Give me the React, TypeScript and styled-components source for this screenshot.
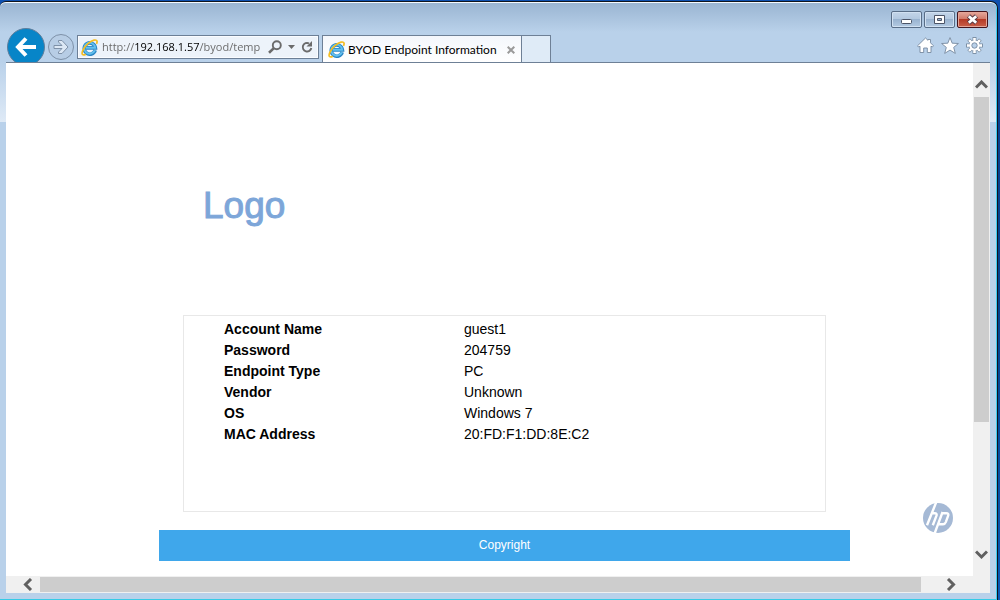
import React from "react";
import styled, { createGlobalStyle, css } from "styled-components";

const Global = createGlobalStyle`
  *, *::before, *::after { box-sizing: border-box; }
  html { background: #0448a0; }
  body { margin: 0; font-family: "Liberation Sans", Arial, sans-serif; }
  button { padding: 0; margin: 0; border: 0; background: none; font: inherit; cursor: pointer; }
  svg { display: block; }
`;

const Desktop = styled.div`
  min-height: 100vh;
  display: flex;
  padding: 1px 2px 0 0;
  background: linear-gradient(#0d50b0, #0a3f94 16%, #04408f 50%, #0a58b8);
`;

const Frame = styled.div`
  flex: 1;
  display: flex;
  flex-direction: column;
  min-width: 0;
  padding: 1px 7px 7px 6px;
  border: solid #10141c;
  border-width: 1px 1px 0 0;
  border-radius: 6px 7px 0 0;
  background:
    linear-gradient(#b9d1ea, #dfeaf6) left 60px / 6px 60px no-repeat,
    linear-gradient(#b9d1ea, #dfeaf6) right 60px / 7px 60px no-repeat,
    linear-gradient(#99b4d1, #b9d1ea 30px, #b9d1ea 61px, #b9d1ea);
  box-shadow: inset 0 1px #f4f9fe, inset -1px 0 #3ecdf0, inset 0 -1px #36cbe6;
`;

const Caption = styled.div`
  display: flex;
  justify-content: flex-end;
  gap: 2px;
  height: 25px;
  padding: 8px 2px 0 0;
`;

const CaptionButton = styled.button<{ $close?: boolean }>`
  display: grid;
  place-items: center;
  width: 31px;
  height: 17px;
  border: 1px solid ${(p) => (p.$close ? "#45141c" : "#586d87")};
  border-radius: 2px;
  background: ${(p) =>
    p.$close
      ? "linear-gradient(#e6a89c, #cf7868 48%, #b53a26 50%, #c9604a)"
      : "linear-gradient(#c3d5e9, #b2c8e0 48%, #99b3d0 50%, #b3cae2)"};
  box-shadow: inset 0 0 0 1px ${(p) => (p.$close ? "#e4a598" : "#d1e1f2")};
`;

const Toolbar = styled.div`
  display: flex;
  align-items: flex-end;
  height: 35px;
  border-bottom: 1px solid #6e8096;
`;

const Navigation = styled.nav`
  display: flex;
  width: 71px;
  height: 34px;
  overflow: hidden;
`;

const NavButton = styled.button<{ $back?: boolean }>`
  flex: none;
  align-self: flex-start;
  display: grid;
  place-items: center;
  border-radius: 50%;
  ${(p) =>
    p.$back
      ? css`
          width: 38px;
          height: 38px;
          margin-left: 1px;
          background: #0785c8;
          border: 1px solid #5f7e9c;
        `
      : css`
          width: 26px;
          height: 26px;
          margin: 6px 0 0 3px;
          border: 1px solid #7e91a8;
          background: #b7cde5;
        `}
`;

const AddressBar = styled.form`
  display: flex;
  align-items: center;
  width: 242px;
  height: 24px;
  margin-bottom: 3px;
  padding: 0 3px;
  border: 1px solid #6c7f96;
  background: #edf3fa;
  box-shadow: inset 0 0 0 1px #fafcff;
`;

const AddressInput = styled.input`
  flex: 1;
  min-width: 0;
  height: 20px;
  margin: 0 4px;
  padding: 0;
  border: 0;
  outline: 0;
  font: 11px/20px "Open Sans", "Noto Sans", sans-serif;
  color: transparent;
  background: linear-gradient(90deg, #666 33px, #000 33px, #000 98px, #666 98px);
  background-clip: text;
`;

const AddressAction = styled.button`
  display: grid;
  place-items: center;
  width: 16px;
  height: 20px;
`;

const Tab = styled.div`
  display: flex;
  align-items: center;
  width: 200px;
  height: 27px;
  margin-left: 3px;
  padding: 1px 4px 0 5px;
  border: solid #6e8096;
  border-width: 1px 1px 0;
  background: linear-gradient(#f4f7fc, #fff);
`;

const TabTitle = styled.span`
  flex: 1;
  padding-left: 3px;
  white-space: nowrap;
  font: 12px/20px Lato, "Open Sans", sans-serif;
  color: #000;
`;

const TabClose = styled.button`
  display: grid;
  place-items: center;
  width: 12px;
  height: 16px;
`;

const NewTab = styled.button`
  width: 29px;
  height: 27px;
  border: solid #6e8096;
  border-width: 1px 1px 0 0;
  background: #dfebf7;
`;

const Tools = styled.div`
  display: flex;
  gap: 7px;
  margin: 0 7px 8px auto;
`;

const Viewport = styled.main`
  flex: 1;
  display: grid;
  grid-template-columns: minmax(0, 1fr) 17px;
  grid-template-rows: 1fr 17px;
  background: #fff;
`;

const Page = styled.section`
  display: grid;
  grid-template-columns: 153px minmax(0, 1fr) 123px;
  align-content: start;
  padding-bottom: 15px;
`;

const Content = styled.div`
  grid-column: 2;
`;

const Logo = styled.h1`
  margin: 0;
  padding: 122px 0 89px 44px;
  font: 37px/41px "Liberation Sans", Arial, sans-serif;
  color: #7da6d9;
  -webkit-text-stroke: 1px #7da6d9;
`;

const Panel = styled.div`
  margin: 0 24px;
  min-height: 197px;
  padding: 3px 39px;
  border: 1px solid #e8e8e8;
`;

const Details = styled.table`
  border-collapse: collapse;
  font-size: 14px;
  line-height: 21px;
  color: #000;

  th, td { padding: 0 0 0 1px; text-align: left; }
  th { width: 240px; font-weight: bold; }
`;

const Footer = styled.footer`
  margin-top: 18px;
  background: #3fa7eb;
  color: #fff;
  font-size: 12px;
  line-height: 31px;
  text-align: center;
`;

const Brand = styled.a`
  grid-column: 3;
  align-self: end;
  justify-self: end;
  margin: 0 20px 28px 0;
`;

const ScrollBar = styled.div<{ $vertical?: boolean }>`
  display: flex;
  flex-direction: ${(p) => (p.$vertical ? "column" : "row")};
  padding: ${(p) => (p.$vertical ? "12px 1px 12px" : "1px 12px")};
  background: #f0f0f0;
`;

const ScrollButton = styled.button<{ $vertical?: boolean }>`
  flex: none;
  display: grid;
  place-items: center;
  width: ${(p) => (p.$vertical ? "15px" : "22px")};
  height: ${(p) => (p.$vertical ? "22px" : "15px")};
`;

const Track = styled.div<{ $vertical?: boolean }>`
  flex: 1;
  display: flex;
  flex-direction: ${(p) => (p.$vertical ? "column" : "row")};
`;

const Thumb = styled.div<{ $share: string }>`
  flex: 0 0 ${(p) => p.$share};
  background: #cdcdcd;
`;

const Corner = styled.div`
  background: #f0f0f0;
`;

const BrowserMark = () => (
  <svg width="17" height="17" viewBox="0 0 17 17" aria-hidden="true">
    <path d="M14.200 11.200A5.600 5.600 0 1 1 14.400 8.900H4.500" fill="none" stroke="#2b86c5" strokeWidth="3.600" />
    <path d="M13.800 11.300A5.500 5.500 0 1 1 14.200 8.800H5" fill="none" stroke="#62c0ee" strokeWidth="1.900" />
    <path d="M4.800 15.200c-1.300.8-2.600 1-3.300.3C.2 14.200 2.200 8.600 7 4.600S15.500.3 16 2.100c.2.900 0 1.800-.5 2.800" fill="none" stroke="#f4bd22" strokeWidth="1.700" />
  </svg>
);

const arrows = {
  up: "M1 7.500 6.500 2 12 7.500",
  down: "M1 4.500 6.500 10 12 4.500",
  left: "M8 1 2.500 6.500 8 12",
  right: "M4 1 9.500 6.500 4 12",
};

const Arrow = ({ to }: { to: keyof typeof arrows }) => (
  <svg width="13" height="13" viewBox="0 0 13 13" aria-hidden="true">
    <path d={arrows[to]} fill="none" stroke="#606060" strokeWidth="3" />
  </svg>
);

const details = [
  ["Account Name", "guest1"],
  ["Password", "204759"],
  ["Endpoint Type", "PC"],
  ["Vendor", "Unknown"],
  ["OS", "Windows 7"],
  ["MAC Address", "20:FD:F1:DD:8E:C2"],
];

const teeth = [0, 45, 90, 135, 180, 225, 270, 315];

export default function App() {
  return (
    <>
      <Global />
      <Desktop>
        <Frame>
          <Caption>
            <CaptionButton aria-label="Minimize">
              <svg width="13" height="11" viewBox="0 0 13 11">
                <rect x="1.500" y="5.500" width="10" height="4" rx="1" fill="#fff" stroke="#4b5467" />
              </svg>
            </CaptionButton>
            <CaptionButton aria-label="Maximize">
              <svg width="13" height="11" viewBox="0 0 13 11">
                <path d="M1.500 1.500h10v8h-10zM4.500 4.500h4v2h-4z" fill="#fff" fillRule="evenodd" stroke="#4b5467" />
              </svg>
            </CaptionButton>
            <CaptionButton $close aria-label="Close">
              <svg width="13" height="11" viewBox="0 0 13 11">
                <path d="m2.500 2 8 7M10.500 2l-8 7" stroke="#5a3b44" strokeWidth="4.800" />
                <path d="m2.800 2.200 7.400 6.600M10.200 2.200 2.800 8.800" stroke="#fff" strokeWidth="2.800" />
              </svg>
            </CaptionButton>
          </Caption>

          <Toolbar>
            <Navigation aria-label="History">
              <NavButton $back aria-label="Back">
                <svg width="22" height="20" viewBox="0 0 22 20">
                  <path d="M3 10H21M11 1.500 3 10l8 8.500" fill="none" stroke="#fff" strokeWidth="4" />
                </svg>
              </NavButton>
              <NavButton aria-label="Forward">
                <svg width="16" height="16" viewBox="0 0 16 16">
                  <path d="M1 6.500h8L5.500 3V1.500H9L15 8l-6 6.500H5.500V13L9 9.500H1z" fill="#dce8f5" stroke="#7e91a8" />
                </svg>
              </NavButton>
            </Navigation>

            <AddressBar onSubmit={(e) => e.preventDefault()}>
              <BrowserMark />
              <AddressInput aria-label="Address" defaultValue="http://192.168.1.57/byod/temp" />
              <AddressAction aria-label="Search">
                <svg width="14" height="14" viewBox="0 0 14 14">
                  <circle cx="8.800" cy="5.200" r="4" fill="none" stroke="#6b6b6b" strokeWidth="1.900" />
                  <path d="M5.900 8.100 1 12.800" stroke="#6b6b6b" strokeWidth="2.600" />
                </svg>
              </AddressAction>
              <AddressAction type="button" aria-label="Show address history">
                <svg width="7" height="4" viewBox="0 0 7 4">
                  <path d="M0 0h7L3.500 4z" fill="#6b6b6b" />
                </svg>
              </AddressAction>
              <AddressAction type="button" aria-label="Refresh">
                <svg width="12" height="14" viewBox="0 0 12 14">
                  <path d="M8 3.400A4.300 4.300 0 1 0 10.300 8" fill="none" stroke="#6b6b6b" strokeWidth="1.900" />
                  <path d="M11 1v5.500H5.500z" fill="#6b6b6b" />
                </svg>
              </AddressAction>
            </AddressBar>

            <Tab>
              <BrowserMark />
              <TabTitle>BYOD Endpoint Information</TabTitle>
              <TabClose aria-label="Close tab">
                <svg width="8" height="8" viewBox="0 0 8 8">
                  <path d="m.7.7 6.600 6.600M7.300.7.7 7.300" stroke="#9a9a9a" strokeWidth="2" />
                </svg>
              </TabClose>
            </Tab>
            <NewTab aria-label="New tab" />

            <Tools>
              <button aria-label="Home">
                <svg width="17" height="17" viewBox="0 0 17 17">
                  <path d="M8.500 1 11 3.300V2.500h2.500v3.300l3 3-1.200 1.200-1.300-.8v6.300h-3.700v-4.500H6.700v4.500H3V9.200L1.700 10 .5 8.800z" fill="#fff" stroke="#76899f" strokeWidth=".9" />
                </svg>
              </button>
              <button aria-label="Favorites">
                <svg width="18" height="17" viewBox="0 0 18 17">
                  <path d="m9 .6 2.200 5.600 6.200.3-4.700 3.900 1.600 6L9 13.100l-5.300 3.300 1.600-6L.6 6.500l6.200-.3z" fill="#fff" stroke="#76899f" strokeWidth=".9" />
                </svg>
              </button>
              <button aria-label="Tools">
                <svg width="17" height="17" viewBox="0 0 17 17">
                  {teeth.map((a) => (
                    <rect key={a} x="7" y=".5" width="3" height="4" fill="#fff" stroke="#76899f" strokeWidth=".9" transform={`rotate(${a} 8.500 8.500)`} />
                  ))}
                  <circle cx="8.500" cy="8.500" r="5.500" fill="#fff" stroke="#76899f" strokeWidth=".8" />
                  {teeth.map((a) => (
                    <rect key={a} x="7.400" y="1" width="2.200" height="4" fill="#fff" transform={`rotate(${a} 8.500 8.500)`} />
                  ))}
                  <circle cx="8.500" cy="8.500" r="2.700" fill="#b9d1ea" stroke="#76899f" strokeWidth=".9" />
                </svg>
              </button>
            </Tools>
          </Toolbar>

          <Viewport>
            <Page>
              <Content>
                <Logo>Logo</Logo>
                <Panel>
                  <Details>
                    <tbody>
                      {details.map(([name, value]) => (
                        <tr key={name}>
                          <th scope="row">{name}</th>
                          <td>{value}</td>
                        </tr>
                      ))}
                    </tbody>
                  </Details>
                </Panel>
                <Footer>Copyright</Footer>
              </Content>
              <Brand href="#" aria-label="HP">
                <svg width="30" height="30" viewBox="0 0 30 30">
                  <circle cx="15" cy="15" r="15" fill="#a5b9d5" />
                  <path d="M13.300-1 4 22.300M8.300 10.200h3.200c2 0 2.500 1 1.900 2.700L9.800 22.300" fill="none" stroke="#fff" strokeWidth="2.400" />
                  <path d="M19.600 9 11.200 31.500M19.200 10.200h4c2 0 2.500 1 1.900 2.700l-2.300 6.200c-.6 1.500-1.300 2.100-2.800 2.100h-4.300" fill="none" stroke="#fff" strokeWidth="2.400" />
                </svg>
              </Brand>
            </Page>

            <ScrollBar $vertical>
              <ScrollButton $vertical aria-label="Scroll up"><Arrow to="up" /></ScrollButton>
              <Track $vertical><Thumb $share="73%" /></Track>
              <ScrollButton $vertical aria-label="Scroll down"><Arrow to="down" /></ScrollButton>
            </ScrollBar>
            <ScrollBar>
              <ScrollButton aria-label="Scroll left"><Arrow to="left" /></ScrollButton>
              <Track><Thumb $share="98%" /></Track>
              <ScrollButton aria-label="Scroll right"><Arrow to="right" /></ScrollButton>
            </ScrollBar>
            <Corner />
          </Viewport>
        </Frame>
      </Desktop>
    </>
  );
}
